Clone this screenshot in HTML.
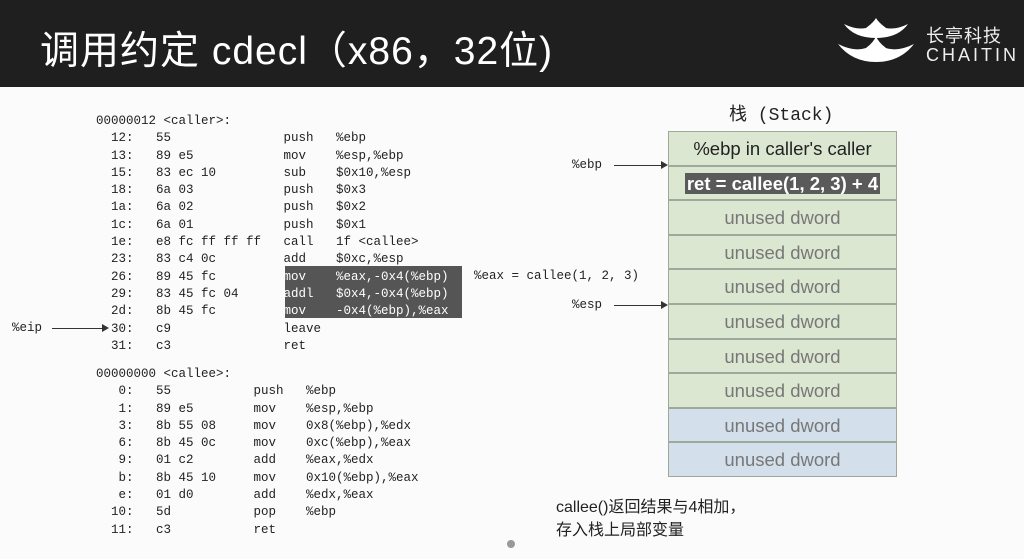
<!DOCTYPE html><html><head><meta charset="utf-8"><style>
body{margin:0;width:1024px;height:559px;background:#fbfbfb;position:relative;overflow:hidden;font-family:"Liberation Sans","Noto Sans CJK SC",sans-serif}
.hdr{position:absolute;left:0;top:0;width:1024px;height:87px;background:#1f1f1f}
.title{position:absolute;left:40px;top:20px;color:#fff;font-size:39px;letter-spacing:1px}
.m{position:absolute;font-family:"Liberation Mono","DejaVu Sans Mono",monospace;font-size:12.5px;color:#222;white-space:pre;line-height:17.3px}
.hl{position:absolute;background:#555;}
.st{position:absolute;left:668px;width:229px;height:34.6px;border:1px solid #9fa89a;box-sizing:border-box;background:#dce7d2;text-align:center;font-size:18.5px;line-height:33px;color:#777}
.blue{background:#d3e0ec}
.arr{position:absolute;height:1px;background:#333}
</style></head><body>
<div class="hdr"></div>
<div class="title">调用约定 cdecl（x86，32位)</div>
<svg style="position:absolute;left:836px;top:16px" width="80" height="50"><path d="M8 8 Q20 14 30 12 Q38 6 40 2 Q42 6 50 12 Q60 14 72 8 Q62 22 40 22 Q18 22 8 8Z" fill="#fff"/><path d="M2 28 Q18 36 30 32 Q38 26 40 20 Q42 26 50 32 Q62 36 78 28 Q64 46 40 46 Q16 46 2 28Z" fill="#fff"/></svg>
<div style="position:absolute;left:926px;top:22px;color:#eee;font-size:18px;letter-spacing:1px">长亭科技</div>
<div style="position:absolute;left:926px;top:45px;color:#eee;font-size:18px;letter-spacing:3px">CHAITIN</div>
<div class="hl" style="left:285px;top:266px;width:177px;height:52px"></div>
<div class="m" style="left:96px;top:113px">00000012 &lt;caller&gt;:
  12:   55               push   %ebp
  13:   89 e5            mov    %esp,%ebp
  15:   83 ec 10         sub    $0x10,%esp
  18:   6a 03            push   $0x3
  1a:   6a 02            push   $0x2
  1c:   6a 01            push   $0x1
  1e:   e8 fc ff ff ff   call   1f &lt;callee&gt;
  23:   83 c4 0c         add    $0xc,%esp
  26:   89 45 fc         <span style="color:#fff">mov    %eax,-0x4(%ebp)</span>
  29:   83 45 fc 04      <span style="color:#fff">addl   $0x4,-0x4(%ebp)</span>
  2d:   8b 45 fc         <span style="color:#fff">mov    -0x4(%ebp),%eax</span>
  30:   c9               leave
  31:   c3               ret</div>
<div class="m" style="left:96px;top:366px">00000000 &lt;callee&gt;:
   0:   55           push   %ebp
   1:   89 e5        mov    %esp,%ebp
   3:   8b 55 08     mov    0x8(%ebp),%edx
   6:   8b 45 0c     mov    0xc(%ebp),%eax
   9:   01 c2        add    %eax,%edx
   b:   8b 45 10     mov    0x10(%ebp),%eax
   e:   01 d0        add    %edx,%eax
  10:   5d           pop    %ebp
  11:   c3           ret</div>
<div class="m" style="left:12px;top:320px">%eip</div>
<div class="arr" style="left:52px;top:328px;width:52px"></div>
<div style="position:absolute;left:102px;top:324px;border-left:7px solid #333;border-top:4px solid transparent;border-bottom:4px solid transparent"></div>
<div class="m" style="left:474px;top:268px">%eax = callee(1, 2, 3)</div>
<div class="m" style="left:572px;top:157px">%ebp</div>
<div class="arr" style="left:614px;top:165px;width:50px"></div>
<div style="position:absolute;left:661px;top:161px;border-left:7px solid #333;border-top:4px solid transparent;border-bottom:4px solid transparent"></div>
<div class="m" style="left:572px;top:297px">%esp</div>
<div class="arr" style="left:614px;top:305px;width:50px"></div>
<div style="position:absolute;left:661px;top:301px;border-left:7px solid #333;border-top:4px solid transparent;border-bottom:4px solid transparent"></div>
<div style="position:absolute;left:729px;top:100px;font-size:18px;color:#222;font-family:'Liberation Mono','Noto Sans CJK SC',monospace">栈 (Stack)</div>
<div class="st" style="top:131px;color:#222">%ebp in caller's caller</div>
<div class="st" style="top:165.6px"><span style="background:#5a5a5a;color:#fff;font-weight:bold;padding:0 2px">ret = callee(1, 2, 3) + 4</span></div>
<div class="st" style="top:200.2px">unused dword</div>
<div class="st" style="top:234.8px">unused dword</div>
<div class="st" style="top:269.4px">unused dword</div>
<div class="st" style="top:304px">unused dword</div>
<div class="st" style="top:338.6px">unused dword</div>
<div class="st" style="top:373.2px">unused dword</div>
<div class="st blue" style="top:407.8px">unused dword</div>
<div class="st blue" style="top:442.4px">unused dword</div>
<div style="position:absolute;left:556px;top:496px;font-size:16px;color:#222;line-height:23px">callee()返回结果与4相加，<br>存入栈上局部变量</div>
<div style="position:absolute;left:507px;top:540px;width:8px;height:8px;border-radius:50%;background:#999"></div>
</body></html>
